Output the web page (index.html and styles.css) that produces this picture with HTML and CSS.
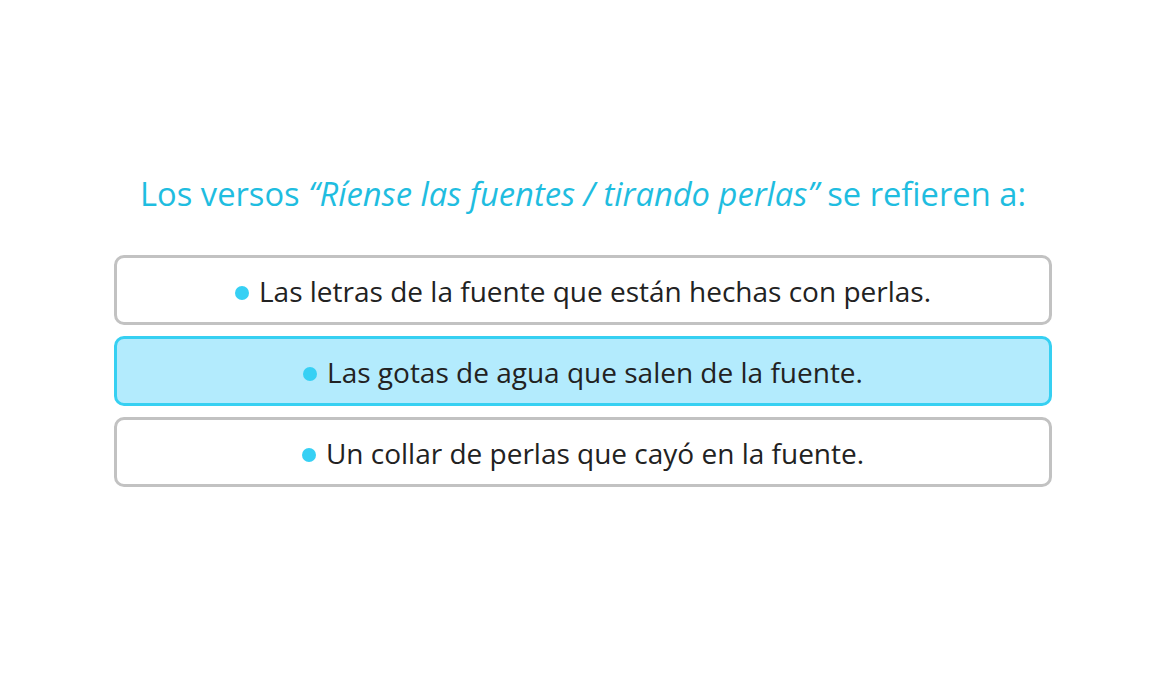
FILE: index.html
```html
<!DOCTYPE html>
<html lang="es">
<head>
<meta charset="utf-8">
<link rel="stylesheet" href="styles.css">
</head>
<body>
<main class="quiz">
  <h1 class="question">Los versos <em>“Ríense las fuentes / tirando perlas”</em> se refieren a:</h1>
  <ul class="options">
    <li class="option"><span class="dot"></span>Las letras de la fuente que están hechas con perlas.</li>
    <li class="option selected"><span class="dot"></span>Las gotas de agua que salen de la fuente.</li>
    <li class="option"><span class="dot"></span>Un collar de perlas que cayó en la fuente.</li>
  </ul>
</main>
</body>
</html>
```
FILE: styles.css
```css
html, body { margin: 0; padding: 0; background: #fff; }
body { font-family: "Open Sans", "Noto Sans", sans-serif; }
.quiz {
  width: 938px;
  margin-left: 114px;
  padding-top: 169px;
}
.question {
  margin: 0 0 36px 0;
  text-align: center;
  font-weight: 400;
  font-size: 32.7px;
  line-height: 50px;
  color: #1fbde0;
}
.question em { font-style: italic; }
.options { list-style: none; margin: 0; padding: 0; display: flex; flex-direction: column; gap: 11px; }
.option {
  box-sizing: border-box;
  height: 70px;
  border: 3px solid #c2c2c2;
  border-radius: 10px;
  display: flex;
  align-items: center;
  justify-content: center;
  font-size: 28px;
  color: #222;
  padding-top: 2px;
}
.option.selected { background: #b3ebfd; border-color: #36d0f2; }
.dot {
  width: 14px; height: 14px; border-radius: 50%;
  background: #36d0f4; margin-right: 10px; margin-top: 3px;
}
```
